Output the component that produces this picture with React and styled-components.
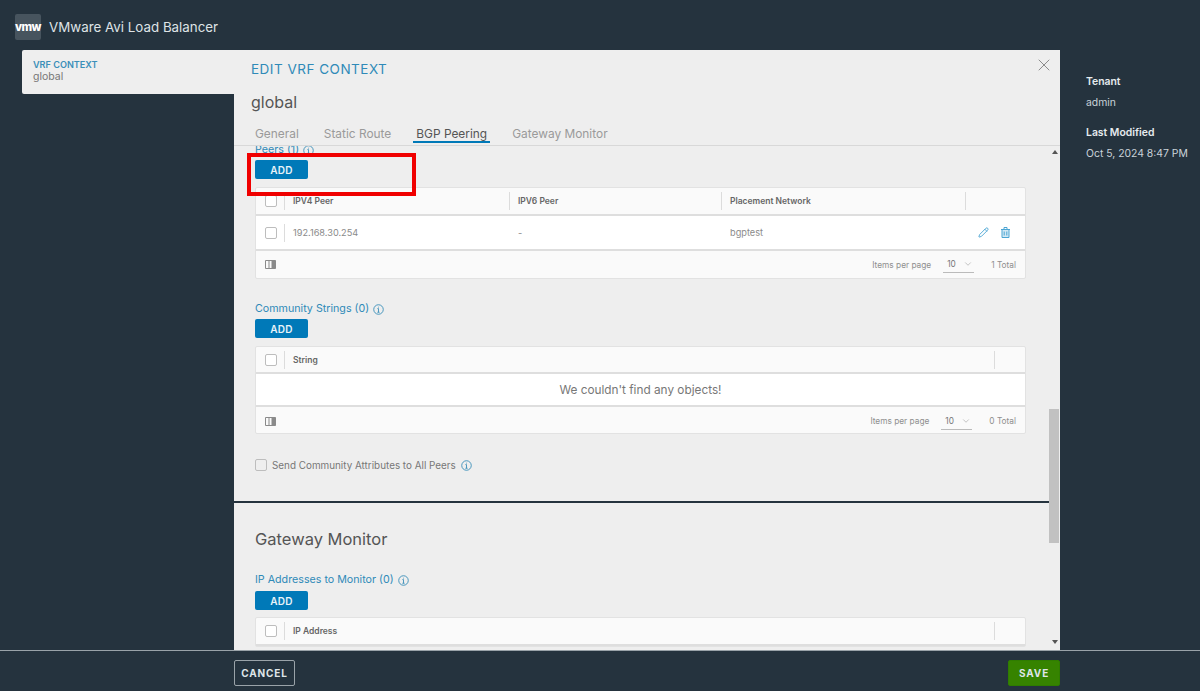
import React from "react";
import styled, { createGlobalStyle } from "styled-components";
import { ChevronDown, Pencil, X } from "lucide-react";

const GlobalStyle = createGlobalStyle`
  html, body {
    margin: 0;
    height: 100%;
    background: #25333e;
    font-family: "Inter", "Liberation Sans", sans-serif;
  }
  * { box-sizing: border-box; }
`;

const Page = styled.div`
  height: 100vh;
  display: flex;
  flex-direction: column;
  overflow: hidden;
`;

const Header = styled.header`
  height: 50px;
  flex: none;
  display: flex;
  align-items: center;
  gap: 8px;
  padding: 4px 0 0 15px;
`;

const Logo = styled.div`
  width: 26px;
  height: 26px;
  background: #47545e;
  border-radius: 2px;
  color: #fff;
  font-size: 11.5px;
  font-weight: 800;
  letter-spacing: -0.6px;
  display: flex;
  align-items: center;
  justify-content: center;
`;

const Brand = styled.div`
  color: #dfe3e6;
  font-size: 13.35px;
  margin-top: -1px;
`;

const Main = styled.div`
  flex: 1;
  min-height: 0;
  display: flex;
`;

const Crumbs = styled.div`
  width: 234px;
  flex: none;
  padding-left: 22px;
`;

const CrumbCard = styled.div`
  height: 44px;
  background: #eee;
  border-radius: 2px 0 0 2px;
  padding: 9px 11px;
  line-height: 12px;
`;

const CrumbTitle = styled.div`
  color: #3b8fb9;
  font-size: 9.1px;
  font-weight: 600;
`;

const CrumbName = styled.div`
  color: #777;
  font-size: 10.5px;
`;

const Modal = styled.section`
  position: relative;
  width: 826px;
  flex: none;
  background: #eee;
  display: flex;
  flex-direction: column;
  min-height: 0;
`;

const ModalHead = styled.div`
  height: 96px;
  flex: none;
  padding: 0 17px;
  border-bottom: 1px solid #d8d8d8;
  display: flex;
  flex-direction: column;
`;

const ModalTitle = styled.h1`
  margin: 11px 0 0;
  color: #2f8ab8;
  font-size: 13.5px;
  line-height: 17px;
  font-weight: 400;
  letter-spacing: 0.5px;
`;

const ObjectName = styled.div`
  margin-top: 14px;
  color: #555;
  font-size: 16px;
  line-height: 20px;
`;

const Tabs = styled.nav`
  margin-top: 14px;
  display: flex;
  gap: 25px;
  padding-left: 4px;
`;

const Tab = styled.div`
  color: ${(p) => (p.$active ? "#555" : "#9a9a9a")};
  font-size: 11.9px;
  line-height: 15px;
  height: 17px;
  padding: 0 3px;
  margin: 0 -3px;
  border-bottom: ${(p) => (p.$active ? "2px solid #0079b8" : "none")};
`;

const CloseBtn = styled.button`
  position: absolute;
  top: 5px;
  right: 6px;
  padding: 0;
  border: 0;
  background: none;
  color: #777;
  display: flex;
`;

const Body = styled.div`
  flex: 1;
  min-height: 0;
  display: flex;
  overflow: hidden;
`;

const Scroller = styled.div`
  width: 815px;
  flex: none;
  overflow: hidden;
`;

const Block = styled.div`
  padding: 0 23px 0 21px;
`;

const Label = styled.div`
  color: #2f8ab8;
  font-size: 10.7px;
  line-height: 14px;
  padding-top: 1px;
  display: flex;
  align-items: center;
  gap: 4px;
  margin-top: ${(p) => p.$top || 0}px;
`;

const AddButton = styled.button`
  display: block;
  width: 53px;
  height: 19px;
  margin-top: ${(p) => p.$top || 3}px;
  padding: 0;
  border: 0;
  border-radius: 2px;
  background: #0079b8;
  color: #e8f3f8;
  font: 600 10px "Inter", sans-serif;
  letter-spacing: 0.2px;
`;

const Table = styled.div`
  margin-top: ${(p) => p.$top || 8}px;
  width: 771px;
  background: #fafafa;
  border: 1px solid #e2e2e2;
  border-radius: 2px;
`;

const Row = styled.div`
  display: grid;
  grid-template-columns: ${(p) => p.$cols};
  align-items: center;
  height: ${(p) => p.$h}px;
  background: ${(p) => (p.$white ? "#fff" : "transparent")};
  border-bottom: 2px solid #dedede;
`;

const Cell = styled.div`
  height: 18px;
  padding-left: 8px;
  border-left: 1px solid ${(p) => (p.$plain ? "transparent" : "#dcdcdc")};
  display: flex;
  align-items: center;
  color: ${(p) => (p.$head ? "#666" : "#8a8a8a")};
  font-size: ${(p) => (p.$head ? 8.5 : 9.2)}px;
  font-weight: ${(p) => (p.$head ? 600 : 400)};
`;

const CheckCell = styled.div`
  display: flex;
  padding-left: 9px;
`;

const Check = styled.span`
  display: block;
  width: 12px;
  height: 12px;
  flex: none;
  border: 1px solid #bdbdbd;
  border-radius: 2px;
  background: ${(p) => p.$bg || "#fff"};
`;

const Actions = styled.div`
  display: flex;
  justify-content: flex-end;
  align-items: center;
  gap: 12px;
  color: #4ba5d3;
  padding-right: 15px;
`;

const Empty = styled.div`
  height: 33px;
  background: #fff;
  border-bottom: 2px solid #dedede;
  display: flex;
  align-items: center;
  justify-content: center;
  color: #777;
  font-size: 11.8px;
`;

const TableFoot = styled.div`
  height: ${(p) => p.$h}px;
  display: flex;
  align-items: center;
  padding: ${(p) => (p.$h < 27 ? 2 : 0)}px 9px 0;
  color: #8f8f8f;
  font-size: 8.3px;
`;

const Columns = styled.svg`
  margin-right: auto;
`;

const PageSize = styled.div`
  width: 31px;
  height: 17px;
  margin: 0 17px 0 12px;
  padding-left: 4px;
  border-bottom: 1px solid #bbb;
  display: flex;
  align-items: center;
  gap: 7px;
  color: #777;
`;

const CheckLine = styled.label`
  margin-top: 25px;
  display: flex;
  align-items: center;
  gap: 5px;
  color: #777;
  font-size: 9.9px;
`;

const Divider = styled.hr`
  margin: 30px 0 0;
  height: 2px;
  border: 0;
  background: #25333e;
`;

const SectionTitle = styled.h2`
  margin: 26px 0 0;
  color: #555;
  font-size: 16.5px;
  line-height: 20px;
  font-weight: 400;
`;

const Scrollbar = styled.div`
  width: 11px;
  flex: none;
  display: flex;
  flex-direction: column;
  background: #eee;
`;

const Arrow = styled.span`
  align-self: center;
  width: 0;
  height: 0;
  border-left: 3px solid transparent;
  border-right: 3px solid transparent;
  border-${(p) => (p.$down ? "top" : "bottom")}: 4px solid #555;
  margin-top: ${(p) => p.$top}px;
`;

const Thumb = styled.div`
  width: 10px;
  height: 134px;
  background: #c1c1c1;
  margin-top: 255px;
`;

const Side = styled.aside`
  padding: 25px 0 0 26px;
  color: #c9d2d9;
  font-size: 10.4px;
`;

const SideLabel = styled.div`
  color: #e6ebee;
  font-weight: 600;
  line-height: 14px;
  margin-top: ${(p) => p.$top || 0}px;
`;

const SideValue = styled.div`
  line-height: 14px;
  margin-top: 7px;
`;

const Footer = styled.footer`
  height: 41px;
  flex: none;
  border-top: 1px solid #9aa3a9;
  padding: 9px 140px 0 234px;
  display: flex;
  justify-content: space-between;
  align-items: flex-start;
`;

const FootButton = styled.button`
  height: 26px;
  width: ${(p) => p.$w}px;
  padding: 0;
  border-radius: 2px;
  border: ${(p) => (p.$save ? "1px solid #2f7d00" : "1.5px solid #9aa3a9")};
  background: ${(p) => (p.$save ? "#368300" : "transparent")};
  color: #dfe5e8;
  font: 700 10px "Inter", sans-serif;
  letter-spacing: 0.9px;
`;

const Highlight = styled.div`
  position: absolute;
  left: 13px;
  top: 103px;
  width: 169px;
  height: 43px;
  border: 4px solid #f00000;
`;

const InfoIcon = () => (
  <svg width="11" height="11" viewBox="0 0 12 12" fill="none" stroke="#3b8fb9">
    <circle cx="6" cy="6" r="5.2" />
    <path d="M6 3v.8M6 5v4M4.8 9h2.4M4.8 5H6" />
  </svg>
);

const TrashIcon = () => (
  <svg width="9" height="11" viewBox="0 0 9 11" fill="none" stroke="currentColor">
    <path d="M1 2.5h7v8H1z" fill="currentColor" fillOpacity="0.25" />
    <path d="M0 2.5h9M3 2.5v-2h3v2M3.2 4.5v4M5.8 4.5v4" />
  </svg>
);

const ColumnsIcon = () => (
  <Columns width="11" height="9" viewBox="0 0 11 9" fill="none" stroke="#8a8a8a">
    <path d="M.5.5h10v8H.5zM4 .5v8M7 .5v8" />
    <path d="M7.5 1h3v7h-3z" fill="#8a8a8a" />
  </Columns>
);

const Pager = ({ total, h }) => (
  <TableFoot $h={h}>
    <ColumnsIcon />
    <span>Items per page</span>
    <PageSize>
      10 <ChevronDown size={10} strokeWidth={1} />
    </PageSize>
    <span>{total} Total</span>
  </TableFoot>
);

const peerCols = "28px 225px 212px 244px 1fr";
const oneCol = "28px 710px 1fr";

const App = () => {
  return (
    <Page>
      <GlobalStyle />
      <Header>
        <Logo>vmw</Logo>
        <Brand>VMware Avi Load Balancer</Brand>
      </Header>
      <Main>
        <Crumbs>
          <CrumbCard>
            <CrumbTitle>VRF CONTEXT</CrumbTitle>
            <CrumbName>global</CrumbName>
          </CrumbCard>
        </Crumbs>
        <Modal>
          <ModalHead>
            <ModalTitle>EDIT VRF CONTEXT</ModalTitle>
            <ObjectName>global</ObjectName>
            <Tabs>
              <Tab>General</Tab>
              <Tab>Static Route</Tab>
              <Tab $active>BGP Peering</Tab>
              <Tab>Gateway Monitor</Tab>
            </Tabs>
          </ModalHead>
          <CloseBtn aria-label="Close">
            <X size={20} strokeWidth={1} />
          </CloseBtn>
          <Body>
            <Scroller>
              <Block>
                <Label $top={-4}>Peers (1) <InfoIcon /></Label>
                <AddButton>ADD</AddButton>
                <Table>
                  <Row $cols={peerCols} $h={28}>
                    <CheckCell><Check /></CheckCell>
                    <Cell $head>IPV4 Peer</Cell>
                    <Cell $head>IPV6 Peer</Cell>
                    <Cell $head>Placement Network</Cell>
                    <Cell $head />
                  </Row>
                  <Row $cols={peerCols} $h={35} $white>
                    <CheckCell><Check /></CheckCell>
                    <Cell>192.168.30.254</Cell>
                    <Cell $plain>-</Cell>
                    <Cell $plain>bgptest</Cell>
                    <Actions>
                      <Pencil size={11} />
                      <TrashIcon />
                    </Actions>
                  </Row>
                  <Pager total={1} h={27} />
                </Table>
                <Label $top={22}>Community Strings (0) <InfoIcon /></Label>
                <AddButton>ADD</AddButton>
                <Table>
                  <Row $cols={oneCol} $h={27}>
                    <CheckCell><Check /></CheckCell>
                    <Cell $head>String</Cell>
                    <Cell $head />
                  </Row>
                  <Empty>We couldn't find any objects!</Empty>
                  <Pager total={0} h={26} />
                </Table>
                <CheckLine>
                  <Check $bg="transparent" />
                  Send Community Attributes to All Peers <InfoIcon />
                </CheckLine>
              </Block>
              <Divider />
              <Block>
                <SectionTitle>Gateway Monitor</SectionTitle>
                <Label $top={23}>IP Addresses to Monitor (0) <InfoIcon /></Label>
                <AddButton $top={4}>ADD</AddButton>
                <Table $top={7}>
                  <Row $cols={oneCol} $h={28}>
                    <CheckCell><Check /></CheckCell>
                    <Cell $head>IP Address</Cell>
                    <Cell $head />
                  </Row>
                </Table>
              </Block>
            </Scroller>
            <Scrollbar>
              <Arrow $top={4} />
              <Thumb />
              <Arrow $down $top={97} />
            </Scrollbar>
          </Body>
          <Highlight />
        </Modal>
        <Side>
          <SideLabel>Tenant</SideLabel>
          <SideValue>admin</SideValue>
          <SideLabel $top={16}>Last Modified</SideLabel>
          <SideValue>Oct 5, 2024 8:47 PM</SideValue>
        </Side>
      </Main>
      <Footer>
        <FootButton $w={61}>CANCEL</FootButton>
        <FootButton $w={52} $save>SAVE</FootButton>
      </Footer>
    </Page>
  );
};

export default App;
